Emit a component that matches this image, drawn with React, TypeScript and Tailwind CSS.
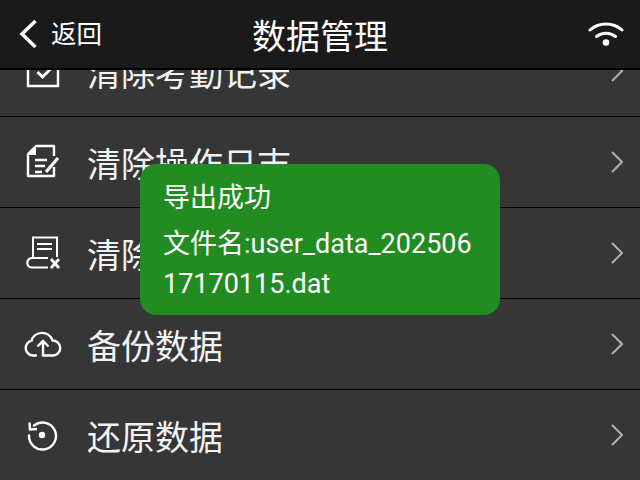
const font = { fontFamily: '"Roboto", "Noto Sans CJK SC", sans-serif' };

const S = { fill: 'none', stroke: 'white', strokeWidth: 2 } as const;

function IconCheck() {
  return (
    <svg width="36" height="36" viewBox="0 0 36 36" {...S}>
      <path d="M2 2H32V33H2Z" strokeWidth="2.400" />
      <path d="M11.500 24L16.500 29L24.500 21" transform="translate(0 -5)" strokeWidth="3" />
    </svg>
  );
}
function IconEdit() {
  return (
    <svg width="36" height="36" viewBox="0 0 36 36" {...S}>
      <path d="M28 12V2H10L2 10V32H28V23" strokeWidth="2.400" strokeLinejoin="round" />
      <path d="M2 11L10 2V11Z" fill="white" stroke="none" />
      <path d="M9 16H21M9 22H19M9 28H16" strokeWidth="2.400" />
      <path d="M20 28L32 14" strokeWidth="3.200" />
    </svg>
  );
}
function IconBillX() {
  return (
    <svg width="36" height="36" viewBox="0 0 36 36" {...S}>
      <path d="M31 22V2.500H7V23" strokeWidth="2" />
      <path d="M22 23H6A4.500 4.500 0 0 0 6 32.500H22" strokeWidth="2.200" />
      <path d="M11 9H26M11 14H26" strokeWidth="2" />
      <path d="M25 24L33 33M33 24L25 33" strokeWidth="2.800" />
    </svg>
  );
}
function IconCloud() {
  return (
    <svg width="38" height="30" viewBox="0 0 38 30" {...S}>
      <path
        d="M12 26.500H9A7.500 7.500 0 0 1 7.500 11.700 A11 11 0 0 1 28.500 11.500 A7.500 7.500 0 0 1 29 26.500H19"
        strokeWidth="2.400"
        strokeLinecap="round"
      />
      <path d="M19 27V12M13.500 17.500L19 12L24.500 17.500" strokeWidth="2.400" />
    </svg>
  );
}
function IconRestore() {
  return (
    <svg width="32" height="32" viewBox="0 0 32 32" {...S}>
      <path d="M8 6.500A13.500 13.500 0 1 1 3 16.500" strokeWidth="2.400" strokeLinecap="round" />
      <path d="M3.500 3.500L4 10.500L11 10" strokeWidth="2.400" />
      <circle cx="16" cy="16" r="3.200" fill="white" stroke="none" />
    </svg>
  );
}

function Row({ icon, label, iconClass }: { icon: React.ReactNode; label: string; iconClass: string }) {
  return (
    <div className="flex h-[91px] shrink-0 items-center border-b border-black bg-[#363636]">
      <div className={`flex w-[88px] shrink-0 justify-center ${iconClass}`}>{icon}</div>
      <span className="-ml-px flex-1 pt-[6px] text-[34px] leading-none whitespace-nowrap text-[#f2f2f2]">{label}</span>
      <svg className="mr-[17px]" width="12" height="22" viewBox="0 0 12 22" fill="none" stroke="#b0b0b0" strokeWidth="2">
        <path d="M1 1L11 11L1 21" />
      </svg>
    </div>
  );
}

export default function App() {
  return (
    <div className="relative flex h-[480px] w-[640px] flex-col overflow-hidden bg-[#363636]" style={font}>
      <header className="z-10 flex h-[70px] shrink-0 items-center justify-between border-b-2 border-black bg-[#1a1a1a] pr-4 pl-[19px]">
        <div className="flex w-[97px] items-center gap-[12px] text-white">
          <svg width="20" height="30" viewBox="0 0 20 30" fill="none" stroke="white" strokeWidth="3.500">
            <path d="M16.500 2L3 15L16.500 28" />
          </svg>
          <span className="pt-[2px] text-[25.500px] leading-none">返回</span>
        </div>
        <h1 className="pt-[5px] text-[34px] leading-none font-normal text-white">数据管理</h1>
        <div className="flex w-[100px] justify-end">
          <svg width="36" height="26" viewBox="0 0 36 26" fill="none" stroke="white" strokeWidth="3" strokeLinecap="round">
            <path d="M2 9C11 1 25 1 34 9" />
            <path d="M8.500 15.500C14 11 22 11 27.500 15.500" />
            <circle cx="18" cy="21.500" r="3.300" fill="white" stroke="none" />
          </svg>
        </div>
      </header>
      <div className="-mt-[44px] flex flex-col">
        <Row label="清除考勤记录" icon={<IconCheck />} iconClass="" />
        <Row label="清除操作日志" icon={<IconEdit />} iconClass="" />
        <Row label="清除用户数据" icon={<IconBillX />} iconClass="" />
        <Row label="备份数据" icon={<IconCloud />} iconClass="pr-[2px]" />
        <Row label="还原数据" icon={<IconRestore />} iconClass="pr-[4px]" />
      </div>
      <div className="absolute top-[164px] left-[140px] z-20 h-[151px] w-[360px] rounded-[16px] bg-[#228b22] pt-[14px] pr-6 pl-[23px] text-[27px] leading-[40px] break-all text-white">
        <div className="mb-[6px]">导出成功</div>
        <div>文件名:user_data_20250617170115.dat</div>
      </div>
    </div>
  );
}
